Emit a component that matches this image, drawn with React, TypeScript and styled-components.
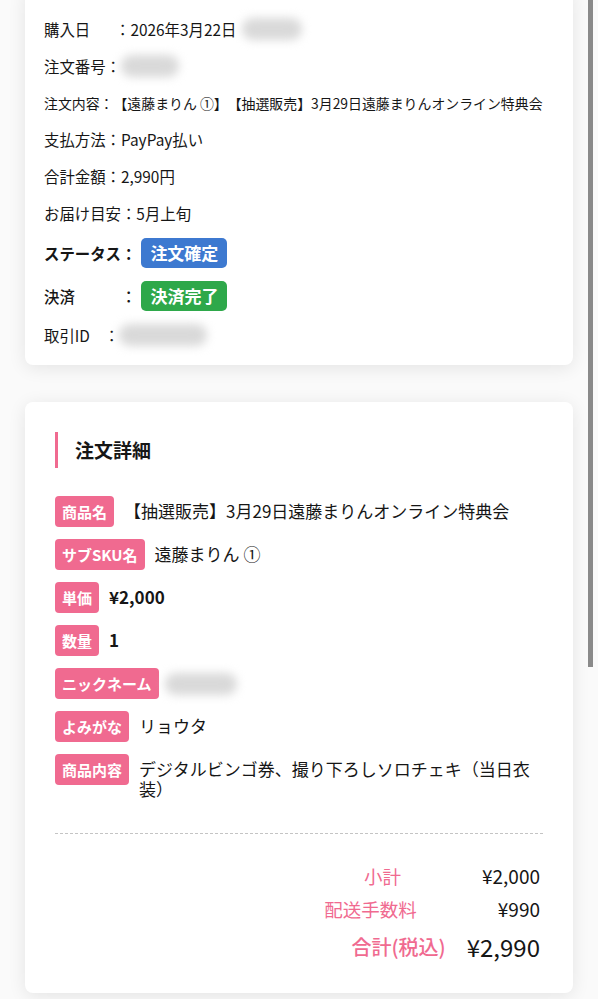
import React from 'react';
import styled, { createGlobalStyle } from 'styled-components';

const GlobalStyle = createGlobalStyle`
  html, body {
    margin: 0;
    padding: 0;
    background: #fafafa;
  }
  body {
    font-family: "Noto Sans CJK JP", "Noto Sans", sans-serif;
    color: #161616;
    overflow: hidden;
    text-spacing-trim: space-all;
  }
`;

const PINK = '#f06a90';

const Page = styled.div`
  display: flex;
  flex-direction: column;
  gap: 37px;
  padding: 0 25px 40px;
  margin-top: -12px;
`;

const Card = styled.section<{ $pad: string }>`
  background: #fff;
  border-radius: 8px;
  box-shadow: 0 3px 18px rgba(0, 0, 0, 0.09);
  padding: ${p => p.$pad};
`;

const InfoList = styled.div`
  display: flex;
  flex-direction: column;
  gap: 12.8px;
`;

const InfoRow = styled.div<{ $small?: boolean }>`
  display: flex;
  align-items: center;
  min-height: 24px;
  line-height: 24px;
  font-size: ${p => (p.$small ? '13.9px' : '15.4px')};
  white-space: nowrap;
`;

const InfoLabel = styled.span<{ $w?: number; $weight?: number }>`
  display: inline-block;
  width: ${p => (p.$w ? `${p.$w}px` : 'auto')};
  font-weight: ${p => p.$weight ?? 400};
`;

const Colon = styled.span<{ $weight?: number }>`
  font-weight: ${p => p.$weight ?? 400};
`;

const Status = styled.span<{ $bg: string }>`
  display: inline-block;
  margin-left: 5px;
  height: 30px;
  line-height: 30px;
  padding: 0 9px;
  border-radius: 5px;
  background: ${p => p.$bg};
  color: #fff;
  font-size: 17px;
  font-weight: 700;
`;

const Redacted = styled.span<{ $w: number; $left?: number; $top?: number }>`
  display: inline-block;
  flex-shrink: 0;
  width: ${p => p.$w}px;
  height: 22px;
  margin-left: ${p => p.$left ?? 0}px;
  margin-top: ${p => p.$top ?? 0}px;
  border-radius: 11px;
  background: #d9d9d9;
  filter: blur(5px);
`;

const Title = styled.h2`
  margin: 0;
  height: 36px;
  line-height: 36px;
  border-left: 3px solid ${PINK};
  padding-left: 17px;
  font-size: 19px;
  font-weight: 700;
`;

const DetailList = styled.div`
  display: flex;
  flex-direction: column;
  gap: 12px;
  margin-top: 28px;
`;

const DetailRow = styled.div`
  display: flex;
  align-items: flex-start;
  gap: 10px;
`;

const Tag = styled.span`
  flex-shrink: 0;
  height: 31px;
  line-height: 31px;
  padding: 0 7px;
  border-radius: 4px;
  background: ${PINK};
  color: #fff;
  font-size: 15px;
  font-weight: 700;
  white-space: nowrap;
`;

const Value = styled.span<{ $bold?: boolean }>`
  padding-top: 5px;
  font-size: 17px;
  line-height: 20px;
  font-weight: ${p => (p.$bold ? 700 : 400)};
`;

const Divider = styled.hr`
  margin: 34px 0 0;
  border: 0;
  border-top: 1px dashed #c4c4c4;
`;

const Summary = styled.div`
  display: flex;
  flex-direction: column;
  align-items: flex-end;
  gap: 7px;
  margin-top: 29px;
  padding-right: 3px;
`;

const SumRow = styled.div<{ $gap: number; $total?: boolean }>`
  display: flex;
  align-items: center;
  gap: ${p => p.$gap}px;
  line-height: ${p => (p.$total ? '32px' : '26px')};
  margin-top: ${p => (p.$total ? '2px' : '0')};
`;

const SumLabel = styled.span<{ $total?: boolean }>`
  color: ${PINK};
  font-size: ${p => (p.$total ? '20px' : '18.5px')};
  font-weight: ${p => (p.$total ? 500 : 400)};
`;

const SumValue = styled.span<{ $total?: boolean }>`
  font-size: ${p => (p.$total ? '24px' : '19px')};
  font-weight: 400;
`;

const Scrollbar = styled.div`
  position: fixed;
  top: 0;
  right: 5px;
  width: 5px;
  height: 667px;
  background: #8a8a8a;
`;

const details: { tag: string; value?: string; bold?: boolean; redacted?: number }[] = [
  { tag: '商品名', value: '【抽選販売】3月29日遠藤まりんオンライン特典会' },
  { tag: 'サブSKU名', value: '遠藤まりん ①' },
  { tag: '単価', value: '¥2,000', bold: true },
  { tag: '数量', value: '1', bold: true },
  { tag: 'ニックネーム', redacted: 72 },
  { tag: 'よみがな', value: 'リョウタ' },
  { tag: '商品内容', value: 'デジタルビンゴ券、撮り下ろしソロチェキ（当日衣装）' },
];

export default function App() {
  return (
    <>
      <GlobalStyle />
      <Page>
        <Card $pad="29px 19px 18px">
          <InfoList>
            <InfoRow>
              <InfoLabel $w={71}>購入日</InfoLabel>
              <Colon>：</Colon>2026年3月22日
              <Redacted $w={60} $left={6} />
            </InfoRow>
            <InfoRow>
              <InfoLabel>注文番号</InfoLabel>
              <Colon>：</Colon>
              <Redacted $w={58} />
            </InfoRow>
            <InfoRow $small>
              注文内容：【遠藤まりん ①】【抽選販売】3月29日遠藤まりんオンライン特典会
            </InfoRow>
            <InfoRow>支払方法：PayPay払い</InfoRow>
            <InfoRow>合計金額：2,990円</InfoRow>
            <InfoRow>お届け目安：5月上旬</InfoRow>
            <InfoRow>
              <InfoLabel $weight={700}>ステータス</InfoLabel>
              <Colon $weight={700}>：</Colon>
              <Status $bg="#3d79d0">注文確定</Status>
            </InfoRow>
            <InfoRow>
              <InfoLabel $w={77} $weight={500}>決済</InfoLabel>
              <Colon $weight={500}>：</Colon>
              <Status $bg="#2ea84a">決済完了</Status>
            </InfoRow>
            <InfoRow>
              <InfoLabel $w={60}>取引ID</InfoLabel>
              <Colon>：</Colon>
              <Redacted $w={88} />
            </InfoRow>
          </InfoList>
        </Card>

        <Card $pad="30px 30px 30px">
          <Title>注文詳細</Title>
          <DetailList>
            {details.map(d => (
              <DetailRow key={d.tag}>
                <Tag>{d.tag}</Tag>
                {d.redacted ? (
                  <Redacted $w={d.redacted} $left={-4} $top={5} />
                ) : (
                  <Value $bold={d.bold}>{d.value}</Value>
                )}
              </DetailRow>
            ))}
          </DetailList>

          <Divider />

          <Summary>
            <SumRow $gap={81}>
              <SumLabel>小計</SumLabel>
              <SumValue>¥2,000</SumValue>
            </SumRow>
            <SumRow $gap={81}>
              <SumLabel>配送手数料</SumLabel>
              <SumValue>¥990</SumValue>
            </SumRow>
            <SumRow $gap={21} $total>
              <SumLabel $total>合計(税込)</SumLabel>
              <SumValue $total>¥2,990</SumValue>
            </SumRow>
          </Summary>
        </Card>
      </Page>
      <Scrollbar />
    </>
  );
}
